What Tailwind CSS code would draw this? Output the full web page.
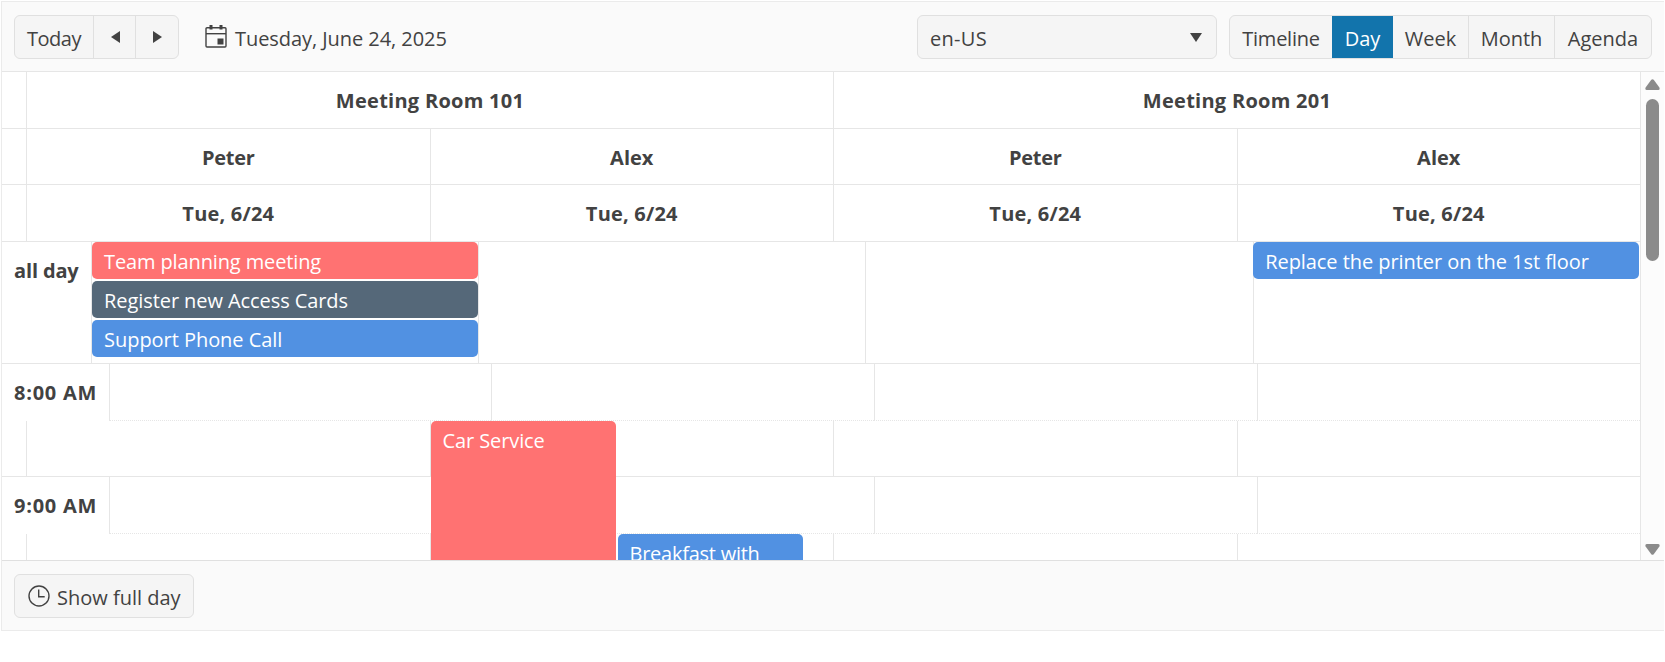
<!DOCTYPE html>
<html lang="en">
<head>
    <meta charset="UTF-8">
    <meta name="viewport" content="width=device-width, initial-scale=1.0">
    <title>Scheduler</title>
    <script src="https://cdn.jsdelivr.net/npm/@tailwindcss/browser@4"></script>
    <style>
        body {
            font-family: 'Open Sans', 'Noto Sans', sans-serif;
        }
    </style>
</head>
<body class="h-screen overflow-hidden bg-white text-[20px] leading-[28px] text-[#424242]">
    <div class="ml-px mt-px flex h-[630px] w-[1663px] flex-col border border-r-0 border-[#ebebeb]">
        <!-- Toolbar -->
        <header class="flex h-[70px] shrink-0 items-center border-b border-[#e6e6e6] bg-[#fafafa] px-3 pt-px">
            <div class="flex h-11 w-[165px] overflow-hidden rounded-md border border-[#e0e0e0] bg-[#f5f5f5]">
                <button class="w-[79px] border-r border-[#e0e0e0] pt-[3px] tracking-[-0.5px]">Today</button>
                <button class="flex w-[42px] items-center justify-center border-r border-[#e0e0e0]">
                    <svg class="ml-px h-3 w-[9px]" viewBox="0 0 9 12" fill="#424242"><path d="M9 0v12L0 6z" /></svg>
                </button>
                <button class="flex flex-1 items-center justify-center">
                    <svg class="h-3 w-[9px]" viewBox="0 0 9 12" fill="#424242"><path d="M0 0v12l9-6z" /></svg>
                </button>
            </div>
            <div class="ml-[26px] flex items-center gap-2">
                <svg class="mb-px h-[23px] w-[22px]" viewBox="0 0 22 23" fill="none" stroke="#424242" stroke-width="1.4">
                    <rect x="1" y="2.7" width="20" height="19.3" rx="1" />
                    <path d="M1 8.7h20" />
                    <path d="M6 0v4.500M16 0v4.500" stroke-width="3" />
                    <path d="M12.500 13.500h6v6h-6z" fill="#424242" stroke="none" />
                </svg>
                <span class="pt-[3px] tracking-[-0.06px]">Tuesday, June 24, 2025</span>
            </div>
            <div class="ml-auto flex h-11 w-[300px] items-center justify-between rounded-md border border-[#e0e0e0] bg-[#f5f5f5] pl-3 pr-3.5">
                <span class="pt-[3px] tracking-[0.3px]">en-US</span>
                <svg class="h-[9px] w-3" viewBox="0 0 12 9" fill="#424242"><path d="M0 0h12L6 9z" /></svg>
            </div>
            <div class="ml-3 flex h-11 w-[423px] overflow-hidden rounded-md border border-[#e0e0e0] bg-[#f5f5f5]">
                <button class="w-[102px] pt-[3px] tracking-[-0.25px]">Timeline</button>
                <button class="-my-px w-[61px] bg-[#1274ac] pt-[3px] text-white">Day</button>
                <button class="w-[76px] border-r border-[#e0e0e0] pt-[3px]">Week</button>
                <button class="w-[86px] border-r border-[#e0e0e0] pt-[3px]">Month</button>
                <button class="flex-1 pt-[3px]">Agenda</button>
            </div>
        </header>

        <!-- Scrollable day view -->
        <main class="flex min-h-0 flex-1 overflow-hidden">
            <div class="w-[1639px] shrink-0 border-r border-[#e6e6e6]">
                <div class="flex h-[57px] border-b border-[#e6e6e6] text-center font-bold leading-[58px] tracking-[0.27px]">
                    <div class="w-6"></div>
                    <div class="flex-1 border-l border-[#e6e6e6]">Meeting Room 101</div>
                    <div class="flex-1 border-l border-[#e6e6e6]">Meeting Room 201</div>
                </div>
                <div class="flex h-[56px] border-b border-[#e6e6e6] text-center font-bold leading-[58px]">
                    <div class="w-6"></div>
                    <div class="flex-1 border-l border-[#e6e6e6] tracking-[-0.3px]">Peter</div>
                    <div class="flex-1 border-l border-[#e6e6e6]">Alex</div>
                    <div class="flex-1 border-l border-[#e6e6e6] tracking-[-0.3px]">Peter</div>
                    <div class="flex-1 border-l border-[#e6e6e6]">Alex</div>
                </div>
                <div class="flex h-[57px] border-b border-[#e6e6e6] text-center font-bold leading-[58px] tracking-[0.2px]">
                    <div class="w-6"></div>
                    <div class="flex-1 border-l border-[#e6e6e6]">Tue, 6/24</div>
                    <div class="flex-1 border-l border-[#e6e6e6]">Tue, 6/24</div>
                    <div class="flex-1 border-l border-[#e6e6e6]">Tue, 6/24</div>
                    <div class="flex-1 border-l border-[#e6e6e6]">Tue, 6/24</div>
                </div>

                <!-- All day -->
                <div class="flex h-[122px] border-b border-[#e6e6e6]">
                    <div class="w-[88.6px] whitespace-nowrap pl-3 font-bold leading-[58px] tracking-[-0.15px]">all day</div>
                    <div class="flex min-w-0 flex-1 flex-col gap-0.5 border-l border-[#e6e6e6] leading-[40px] text-white">
                        <div class="h-[37px] rounded-[5px] bg-[#ff7272] pl-[12.5px] tracking-[-0.13px]">Team planning meeting</div>
                        <div class="h-[37px] rounded-[5px] bg-[#556879] pl-[12.5px] tracking-[-0.08px]">Register new Access Cards</div>
                        <div class="h-[37px] rounded-[5px] bg-[#5191e2] pl-[12.5px] tracking-[-0.05px]">Support Phone Call</div>
                    </div>
                    <div class="min-w-0 flex-1 border-l border-[#e6e6e6]"></div>
                    <div class="min-w-0 flex-1 border-l border-[#e6e6e6]"></div>
                    <div class="min-w-0 flex-1 border-l border-[#e6e6e6] leading-[40px] text-white">
                        <div class="-ml-px mr-px h-[37px] rounded-[5px] bg-[#5191e2] pl-[12.5px] tracking-[-0.06px]">Replace the printer on the 1st floor</div>
                    </div>
                </div>

                <!-- 8:00 AM -->
                <div class="flex h-[57px]">
                    <div class="w-[106.6px] whitespace-nowrap pl-3 font-bold leading-[58px] tracking-[0.75px]">8:00 AM</div>
                    <div class="flex-1 border-b border-l border-[#e6e6e6] [border-bottom-style:dotted]"></div>
                    <div class="flex-1 border-b border-l border-[#e6e6e6] [border-bottom-style:dotted]"></div>
                    <div class="flex-1 border-b border-l border-[#e6e6e6] [border-bottom-style:dotted]"></div>
                    <div class="flex-1 border-b border-l border-[#e6e6e6] [border-bottom-style:dotted]"></div>
                </div>
                <div class="flex h-[56px] border-b border-[#e6e6e6]">
                    <div class="w-6"></div>
                    <div class="flex-1 border-l border-[#e6e6e6]"></div>
                    <div class="relative flex-1 border-l border-[#e6e6e6]">
                        <div class="absolute left-0 top-0 z-10 h-[226px] w-[185px] rounded-[5px] bg-[#ff7272] pl-3 leading-[40px] tracking-[-0.1px] text-white">Car Service</div>
                    </div>
                    <div class="flex-1 border-l border-[#e6e6e6]"></div>
                    <div class="flex-1 border-l border-[#e6e6e6]"></div>
                </div>

                <!-- 9:00 AM -->
                <div class="flex h-[57px]">
                    <div class="w-[106.6px] whitespace-nowrap pl-3 font-bold leading-[58px] tracking-[0.75px]">9:00 AM</div>
                    <div class="flex-1 border-b border-l border-[#e6e6e6] [border-bottom-style:dotted]"></div>
                    <div class="flex-1 border-b border-l border-[#e6e6e6] [border-bottom-style:dotted]"></div>
                    <div class="flex-1 border-b border-l border-[#e6e6e6] [border-bottom-style:dotted]"></div>
                    <div class="flex-1 border-b border-l border-[#e6e6e6] [border-bottom-style:dotted]"></div>
                </div>
                <div class="flex h-[56px] border-b border-[#e6e6e6]">
                    <div class="w-6"></div>
                    <div class="flex-1 border-l border-[#e6e6e6]"></div>
                    <div class="relative flex-1 border-l border-[#e6e6e6]">
                        <div class="absolute left-[187px] top-0 z-10 h-[113px] w-[185px] rounded-[5px] bg-[#5191e2] pl-3 leading-[40px] tracking-[-0.25px] text-white">Breakfast with</div>
                    </div>
                    <div class="flex-1 border-l border-[#e6e6e6]"></div>
                    <div class="flex-1 border-l border-[#e6e6e6]"></div>
                </div>
            </div>
            <!-- Scrollbar -->
            <div class="flex flex-1 flex-col bg-[#fcfcfc] pb-[5px] pl-1 pt-[7px]">
                <svg class="h-[11px] w-[15px] shrink-0" viewBox="0 0 15 11" fill="#8b8b8b"><path d="M6.300.8Q7.500-.4 8.700.8L14.400 8.600Q15.200 10.800 13.300 11H1.700Q-.2 10.800.6 8.600z" /></svg>
                <div class="ml-px mt-[9px] h-[162px] w-[13px] rounded-full bg-[#8b8b8b]"></div>
                <svg class="mt-auto h-[11px] w-[15px] shrink-0 rotate-180" viewBox="0 0 15 11" fill="#8b8b8b"><path d="M6.300.8Q7.500-.4 8.700.8L14.400 8.600Q15.200 10.800 13.300 11H1.700Q-.2 10.800.6 8.600z" /></svg>
            </div>
        </main>

        <!-- Footer -->
        <footer class="flex h-[70px] shrink-0 items-center border-t border-[#e0e0e0] bg-[#fafafa] px-3">
            <button class="flex h-11 w-[180px] items-center gap-[7px] whitespace-nowrap rounded-md border border-[#e0e0e0] bg-[#f5f5f5] pl-[13px]">
                <svg class="h-[22px] w-[22px] shrink-0" viewBox="0 0 22 22" fill="none" stroke="#424242" stroke-width="1.4">
                    <circle cx="11" cy="11" r="10" />
                    <path d="M10.700 4.500v7.200h6" />
                </svg>
                <span class="pt-1">Show full day</span>
            </button>
        </footer>
    </div>
</body>
</html>
